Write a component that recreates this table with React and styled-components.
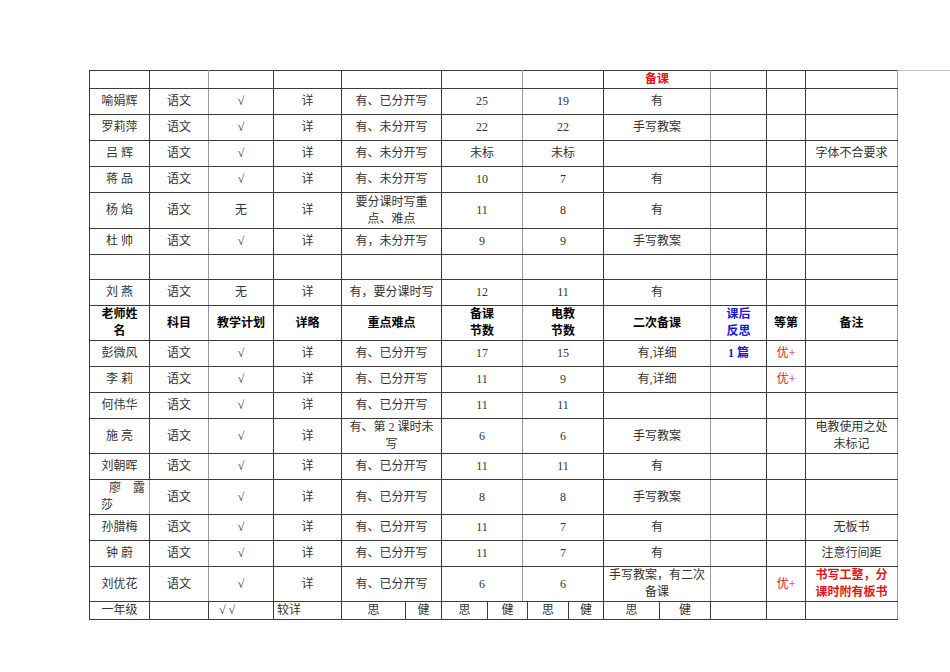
import React from "react";
import styled, { createGlobalStyle } from "styled-components";

const Global = createGlobalStyle`
  html, body { margin: 0; padding: 0; background: #fff; }
  body { font-family: "Liberation Serif", "Noto Sans CJK SC", serif; }
`;

const Page = styled.div`
  display: flex;
  align-items: flex-start;
  padding: 70px 0 0 89px;
  width: 950px;
  height: 672px;
  box-sizing: border-box;
`;

const Tail = styled.div`
  flex: 1;
  border-top: 1px solid #c4c4c4;
`;

const Table = styled.table`
  border-collapse: collapse;
  table-layout: fixed;
  width: 808px;
  font-size: 12px;
  color: #333;
`;

const Cell = styled.td`
  border: 1px solid #3c3c3c;
  ${(p) => (p.$soft ? "border-right-color: #9a9a9a;" : "")}
  padding: 0 2px;
  text-align: ${(p) => p.$align || "center"};
  vertical-align: middle;
  line-height: 17px;
  font-weight: ${(p) => (p.$bold ? 700 : 400)};
  color: ${(p) =>
    p.$tone === "red" ? "#e5141b" : p.$tone === "blue" ? "#1a1ad0" : p.$bold ? "#000" : "#333"};
  ${(p) => (p.$pad !== undefined ? `padding-left: ${p.$pad}px;` : "")}
  white-space: nowrap;
`;

const Row = styled.tr`
  height: ${(p) => p.$h}px;
`;

const Indented = styled.span`
  display: block;
  text-align: left;
  padding-left: ${(p) => p.$indent}px;
`;

const fine = [60, 59, 65, 68, 64, 36, 46, 35, 5, 41, 35, 56, 51, 56, 39, 92];
const mainSpans = [1, 1, 1, 1, 2, 2, 3, 2, 1, 1, 1];
const mainSoft = [false, true, false, false, false, true, false, true, false, false, true];

const c = (text, opt = {}) => ({ text, ...opt });
const B = (text) => c(text, { bold: true });
const R = (text) => c(text, { tone: "red" });
const RB = (text) => c(text, { tone: "red", bold: true });
const BB = (text) => c(text, { tone: "blue", bold: true });

const std = (name, a, b, key, n1, n2, erci, fansi = "", grade = "", note = "") => [
  name, "语文", a, "详", key, n1, n2, erci, fansi, grade, note,
];

const rows = [
  { h: 18, cells: ["", "", "", "", "", "", "", RB("备课"), "", "", ""] },
  { h: 26, cells: std("喻娟辉", "√", "", "有、已分开写", "25", "19", "有") },
  { h: 26, cells: std("罗莉萍", "√", "", "有、未分开写", "22", "22", "手写教案") },
  { h: 26, cells: std("吕  辉", "√", "", "有、未分开写", "未标", "未标", "", "", "", "字体不合要求") },
  { h: 26, cells: std("蒋  品", "√", "", "有、未分开写", "10", "7", "有") },
  { h: 36, cells: std("杨  焰", "无", "", ["要分课时写重", "点、难点"], "11", "8", "有") },
  { h: 26, cells: std("杜  帅", "√", "", "有，未分开写", "9", "9", "手写教案") },
  { h: 25, cells: ["", "", "", "", "", "", "", "", "", "", ""] },
  { h: 26, cells: std("刘  燕", "无", "", "有，要分课时写", "12", "11", "有") },
  {
    h: 35,
    cells: [
      B(["老师姓", "名"]), B("科目"), B("教学计划"), B("详略"), B("重点难点"),
      B(["备课", "节数"]), B(["电教", "节数"]), B("二次备课"), BB(["课后", "反思"]), B("等第"), B("备注"),
    ],
  },
  { h: 26, cells: std("彭微风", "√", "", "有、已分开写", "17", "15", "有,详细", BB("1 篇"), R("优+")) },
  { h: 26, cells: std("李  莉", "√", "", "有、已分开写", "11", "9", "有,详细", "", R("优+")) },
  { h: 26, cells: std("何伟华", "√", "", "有、已分开写", "11", "11", "") },
  { h: 35, cells: std("施  亮", "√", "", ["有、第 2 课时未", "写"], "6", "6", "手写教案", "", "", ["电教使用之处", "未标记"]) },
  { h: 26, cells: std("刘朝晖", "√", "", "有、已分开写", "11", "11", "有") },
  { h: 35, cells: std("liao", "√", "", "有、已分开写", "8", "8", "手写教案") },
  { h: 26, cells: std("孙腊梅", "√", "", "有、已分开写", "11", "7", "有", "", "", "无板书") },
  { h: 26, cells: std("钟  蔚", "√", "", "有、已分开写", "11", "7", "有", "", "", "注意行间距") },
  {
    h: 35,
    cells: std("刘优花", "√", "", "有、已分开写", "6", "6", ["手写教案，有二次", "备课"], "", R("优+"), RB(["书写工整，分", "课时附有板书"])),
  },
];

const norm = (v) => (v && typeof v === "object" && !Array.isArray(v) ? v : { text: v });

const renderText = (t) =>
  Array.isArray(t) ? t.map((line, i) => <div key={i}>{line}</div>) : t;

const bottom = [
  { text: "一年级", span: 1 },
  { text: "", span: 1 },
  { text: "√ √", span: 1, align: "left", pad: 10 },
  { text: "较详", span: 1, align: "left", pad: 3 },
  { text: "思", span: 1 },
  { text: "健", span: 1 },
  { text: "思", span: 1 },
  { text: "健", span: 2 },
  { text: "思", span: 1 },
  { text: "健", span: 1 },
  { text: "思", span: 1 },
  { text: "健", span: 1 },
  { text: "", span: 1 },
  { text: "", span: 1 },
  { text: "", span: 1, soft: true },
];

export default function App() {
  return (
    <>
      <Global />
      <Page>
        <Table>
          <colgroup>
            {fine.map((w, i) => (
              <col key={i} style={{ width: w }} />
            ))}
          </colgroup>
          <tbody>
            {rows.map((row, ri) => (
              <Row key={ri} $h={row.h}>
                {row.cells.map((raw, ci) => {
                  if (raw === "liao") {
                    return (
                      <Cell key={ci} colSpan={1} $soft>
                        <Indented $indent={17}>廖&ensp;&ensp;露</Indented>
                        <Indented $indent={9}>莎</Indented>
                      </Cell>
                    );
                  }
                  const v = norm(raw);
                  return (
                    <Cell
                      key={ci}
                      colSpan={mainSpans[ci]}
                      $soft={mainSoft[ci]}
                      $bold={v.bold}
                      $tone={v.tone}
                    >
                      {renderText(v.text)}
                    </Cell>
                  );
                })}
              </Row>
            ))}
            <Row $h={18}>
              {bottom.map((b, i) => (
                <Cell key={i} colSpan={b.span} $align={b.align} $pad={b.pad} $soft={b.soft}>
                  {b.text}
                </Cell>
              ))}
            </Row>
          </tbody>
        </Table>
        <Tail />
      </Page>
    </>
  );
}
